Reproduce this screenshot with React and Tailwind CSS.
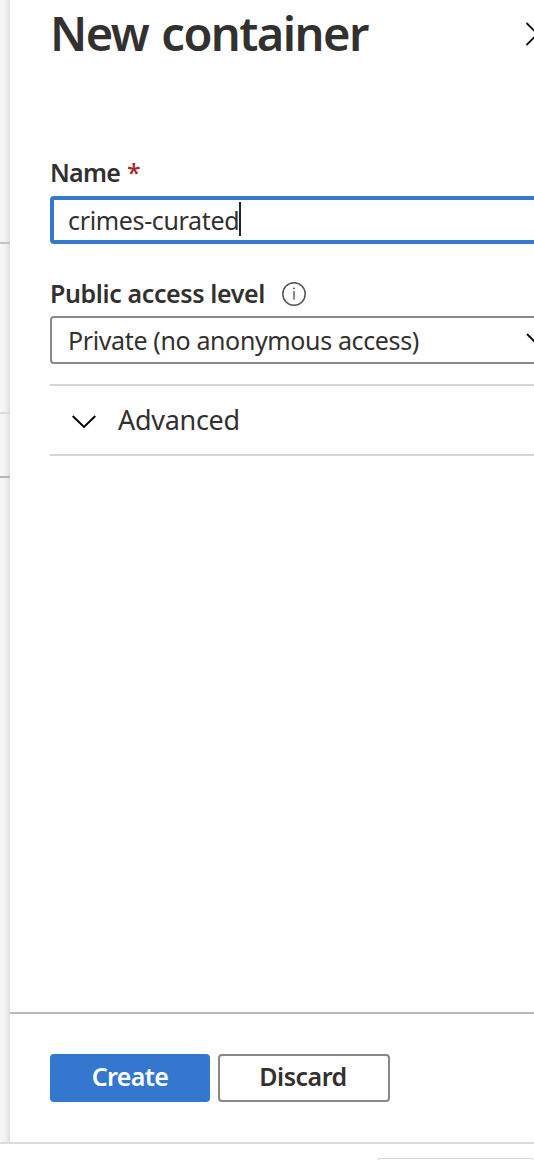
function BackgroundEdge() {
  return (
    <div className="flex w-[10px] shrink-0 flex-col bg-[linear-gradient(to_right,#f7f7f7,#f3f3f3_50%,#dedede)]">
      <div className="h-[242px]" />
      <div className="h-[2px] bg-[#c4c4c4]" />
      <div className="h-[168px]" />
      <div className="h-[2px] bg-[#dadada]" />
      <div className="h-[62px]" />
      <div className="h-[2px] bg-[#b9b9b9]" />
    </div>
  );
}

function InfoIcon() {
  return (
    <svg className="block size-[24px] shrink-0" viewBox="0 0 24 24" fill="none">
      <circle cx="12" cy="12" r="11.2" stroke="#555453" strokeWidth="1.5" />
      <path d="M12 9V17.8" stroke="#666564" strokeWidth="1.5" />
      <circle cx="12" cy="6.6" r="1" fill="#666564" />
    </svg>
  );
}

export default function App() {
  return (
    <div className="flex h-[1160px] w-[534px] flex-col overflow-hidden bg-white font-['Noto_Sans','Open_Sans',sans-serif] text-[25px] text-[#323130]">
      <div className="flex h-[1142px] shrink-0">
        <BackgroundEdge />
        <main className="flex w-[524px] shrink-0 flex-col overflow-hidden bg-white">
          <header className="flex h-[156px] shrink-0 items-start pl-[40px]">
            <h1 className="w-[475px] shrink-0 whitespace-nowrap text-[47px] leading-[66px] font-semibold tracking-[-1.55px] [word-spacing:2.5px]">
              New container
            </h1>
            <button className="mt-[22px] shrink-0" aria-label="Close">
              <svg className="block size-[24px]" viewBox="0 0 24 24" fill="none">
                <path d="M1.5 1L23.5 23M23.5 1L1.5 23" stroke="#111" strokeWidth="1.8" />
              </svg>
            </button>
          </header>

          <section className="flex flex-col pl-[40px]">
            <label className="flex h-[40px] items-start gap-[7px] leading-[32px] font-semibold">
              <span className="whitespace-nowrap tracking-[-0.75px]">Name</span>
              <span className="font-medium text-[#a4262c]">*</span>
            </label>
            <div className="flex h-[48px] w-[520px] items-center rounded-[4px] border-4 border-[#3477cf] pl-[14px]">
              <span className="mt-[2px] whitespace-nowrap tracking-[-0.35px]">crimes-curated</span>
              <span className="mb-[2px] h-[34px] w-[2px] bg-[#222]" />
            </div>

            <div className="mt-[33px] flex h-[34px] items-center gap-[17px] font-semibold">
              <span className="whitespace-nowrap tracking-[-0.38px]">Public access level</span>
              <InfoIcon />
            </div>
            <div className="mt-[5px] flex h-[48px] w-[520px] items-center rounded-[4px] border-2 border-[#8a8886] pl-[16px]">
              <span className="mt-[2px] w-[458px] shrink-0 whitespace-nowrap tracking-[-0.37px]">Private (no anonymous access)</span>
              <svg className="block h-[14px] w-[24px] shrink-0" viewBox="0 0 24 14" fill="none">
                <path d="M1 1L12 12L23 1" stroke="#111" strokeWidth="2" />
              </svg>
            </div>

            <div className="mt-[20px] flex h-[72px] items-center border-y-2 border-[#d4d4d4] pl-[22px]">
              <svg className="mt-[4px] block h-[14px] w-[24px] shrink-0" viewBox="0 0 24 14" fill="none">
                <path d="M.7 1L12 12L23.3 1" stroke="#000" strokeWidth="1.9" />
              </svg>
              <span className="ml-[22px] text-[27px] tracking-[-0.3px]">Advanced</span>
            </div>
          </section>

          <footer className="mt-auto flex h-[130px] shrink-0 items-start gap-[8px] border-t-2 border-[#b8b8b8] pt-[40px] pl-[40px] font-semibold">
            <button className="flex h-[48px] w-[160px] items-center justify-center rounded-[4px] bg-[#3477cf] pb-[2px] tracking-[-0.65px] text-white">
              Create
            </button>
            <button className="flex h-[48px] w-[172px] items-center justify-center rounded-[4px] border-2 border-[#8a8886] pr-[2px] pb-[2px] tracking-[-0.5px]">
              Discard
            </button>
          </footer>
        </main>
      </div>
      <div className="h-[18px] shrink-0 border-t-2 border-[#dcdbe0] bg-white pt-[14px] pl-[375px]">
        <div className="h-[20px] w-[161px] rounded-[6px] border border-[#d4d4d4]" />
      </div>
    </div>
  );
}
